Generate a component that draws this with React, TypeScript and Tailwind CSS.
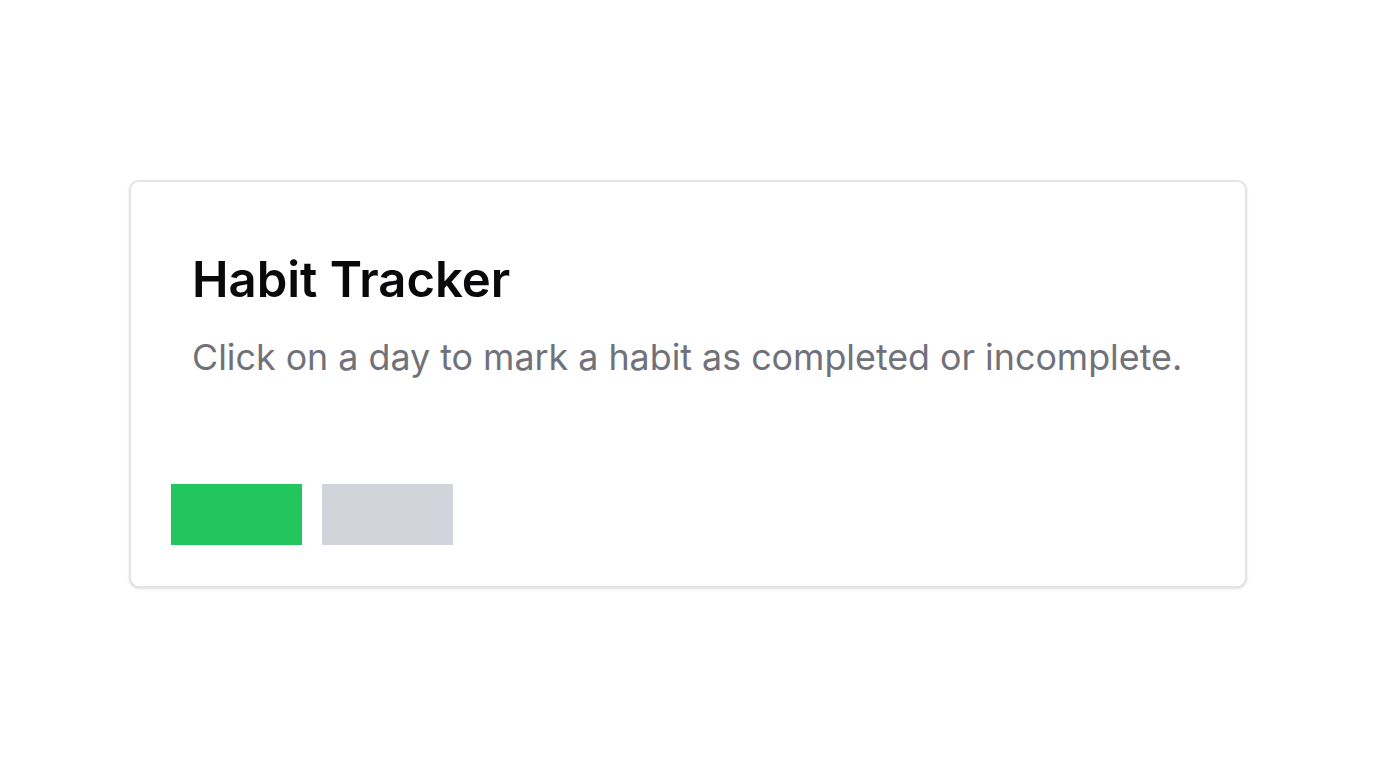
import React, { useState } from "react";

const HabitTracker: React.FC = () => {
  const [days, setDays] = useState<boolean[]>([true, false]);

  const toggleDay = (index: number) => {
    const updated = [...days];
    updated[index] = !updated[index];
    setDays(updated);
  };

  return (
    <div
      className="min-h-screen w-full bg-white flex items-center justify-center"
      style={{ fontFamily: "Inter, 'Noto Sans', sans-serif" }}
    >
      <div className="w-[1118px] h-[408px] bg-white border-2 border-[#e4e4e7] rounded-[10px] shadow-sm flex flex-col">
        <div className="pt-[73px] pl-[61px] pr-[40px]">
          <h2 className="text-[49px] leading-none font-semibold text-[#09090b]">
            Habit Tracker
          </h2>
          <p className="mt-[31px] text-[35.8px] leading-tight text-[#71717a]">
            Click on a day to mark a habit as completed or incomplete.
          </p>
        </div>
        <div className="flex gap-[20px] pl-[40px] mt-[104px]">
          {days.map((done, index) => (
            <button
              key={index}
              onClick={() => toggleDay(index)}
              className={`w-[131px] h-[61px] ${
                done ? "bg-[#22c55e]" : "bg-[#d1d5db]"
              }`}
            />
          ))}
        </div>
      </div>
    </div>
  );
};

export default function App() {
  return <HabitTracker />;
}
